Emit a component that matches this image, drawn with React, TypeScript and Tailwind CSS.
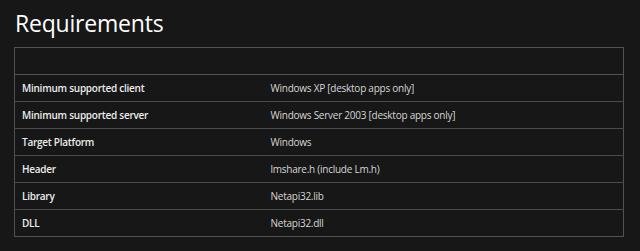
const rows: [string, string][] = [
  ["Minimum supported client", "Windows XP [desktop apps only]"],
  ["Minimum supported server", "Windows Server 2003 [desktop apps only]"],
  ["Target Platform", "Windows"],
  ["Header", "lmshare.h (include Lm.h)"],
  ["Library", "Netapi32.lib"],
  ["DLL", "Netapi32.dll"],
];

export default function App() {
  return (
    <div className="w-[640px] h-[251px] bg-[#171717] text-[#e6e6e6] font-['Open_Sans',sans-serif] pl-[14px] pr-[16px] pt-[6px]">
      <h1 className="text-[23px] leading-[34px] font-medium text-white tracking-[-0.2px] pl-[1px]">Requirements</h1>
      <table className="mt-[7px] w-full border-collapse border border-[#525252] text-[10px] tracking-[-0.25px]">
        <thead>
          <tr className="h-[27px]">
            <th className="border-b border-[#525252] w-[249px]"></th>
            <th className="border-b border-[#525252]"></th>
          </tr>
        </thead>
        <tbody>
          {rows.map(([k, v], i) => (
            <tr key={k} className={`h-[27px] ${i < rows.length - 1 ? "border-b border-[#4a4a4a]" : ""}`}>
              <td className="pl-[7px] font-semibold text-[#ececec]">{k}</td>
              <td className="pl-[7px] text-[#d6d6d6]">{v}</td>
            </tr>
          ))}
        </tbody>
      </table>
    </div>
  );
}
